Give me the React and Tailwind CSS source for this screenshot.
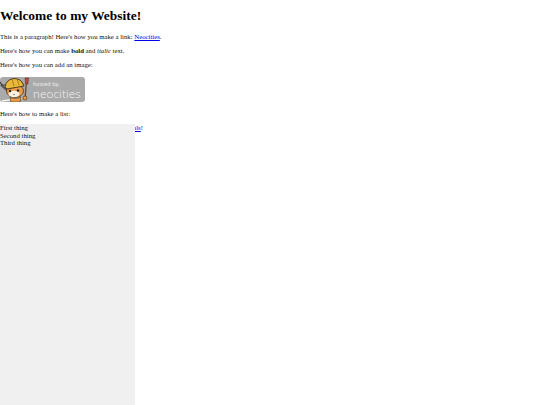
import React from "react";

const Mascot = () => (
  <svg width="31" height="25" viewBox="0 0 31 25" className="shrink-0">
    <path d="M1 8 L10 16" stroke="#555" strokeWidth="1.8" />
    <path d="M0 5 L2 8 L5 8" fill="none" stroke="#333" strokeWidth="1.2" />
    <path d="M22 21 L2 24" stroke="#f4f1e8" strokeWidth="1.5" />
    <ellipse cx="15" cy="14" rx="8.5" ry="6.5" fill="#ec9c48" stroke="#4a3018" strokeWidth="0.8" />
    <path d="M5 10 C6 1 17 -1 22 5 L24 9 L7 12 Z" fill="#eab938" stroke="#3c3016" strokeWidth="0.9" />
    <path d="M12 2 L14 9 M17 2 L19 8" stroke="#a8801e" strokeWidth="1" />
    <ellipse cx="14" cy="17" rx="5.5" ry="3.2" fill="#fbf0e0" />
    <circle cx="10" cy="14" r="1.2" fill="#222" />
    <circle cx="18" cy="13.5" r="1.2" fill="#222" />
    <path d="M13 17 L15 17 L14 18 Z" fill="#333" />
    <path d="M10 20 C12 22 18 22 21 20 L20 25 L11 25 Z" fill="#ec9c48" stroke="#4a3018" strokeWidth="0.6" />
    <path d="M26.5 4 L25 22" stroke="#6a4424" strokeWidth="1.3" />
    <path d="M25 1 L28.5 1 L28 7 L25.5 7 Z" fill="#b5493c" stroke="#5a2a20" strokeWidth="0.5" />
    <circle cx="25" cy="21" r="2" fill="#ec9c48" stroke="#4a3018" strokeWidth="0.6" />
  </svg>
);

const Badge = () => (
  <div className="flex h-[25px] w-[85px] items-center rounded-[3px] bg-[#aaaaaa] text-[#f2f2f2] font-['Open_Sans',sans-serif]">
    <Mascot />
    <div className="flex flex-col pl-[2px]">
      <span className="text-[5.5px] leading-[8px]">hosted by,</span>
      <span className="text-[11.5px] leading-[11px] font-light tracking-[0.2px]">neocities</span>
    </div>
  </div>
);

export default function App() {
  return (
    <div className="relative h-[405px] w-[540px] overflow-hidden bg-white text-[#111] font-['Liberation_Serif',serif] text-[6.75px] leading-[8px]">
      <h1 className="pt-[8px] text-[13.45px] leading-[16px] font-bold text-black">Welcome to my Website!</h1>
      <p className="mt-[9px]">
        This is a paragraph! Here's how you make a link:{" "}
        <a href="#" className="text-[#0000ee] underline">Neocities</a>.
      </p>
      <p className="mt-[6px]">
        Here's how you can make <strong>bold</strong> and <em>italic</em> text.
      </p>
      <p className="mt-[6px]">Here's how you can add an image:</p>
      <div className="mt-[8px]"><Badge /></div>
      <p className="mt-[8px]">Here's how to make a list:</p>
      <p className="mt-[6px] flex w-[143px] justify-end whitespace-nowrap">
        <span>
          <a href="#" className="text-[#0000ee] underline">tutorials</a>!
        </span>
      </p>
      <ul className="absolute left-0 top-[124px] h-[281px] w-[135px] bg-[#f0f0f0] leading-[7.6px]">
        <li>First thing</li>
        <li>Second thing</li>
        <li>Third thing</li>
      </ul>
    </div>
  );
}
